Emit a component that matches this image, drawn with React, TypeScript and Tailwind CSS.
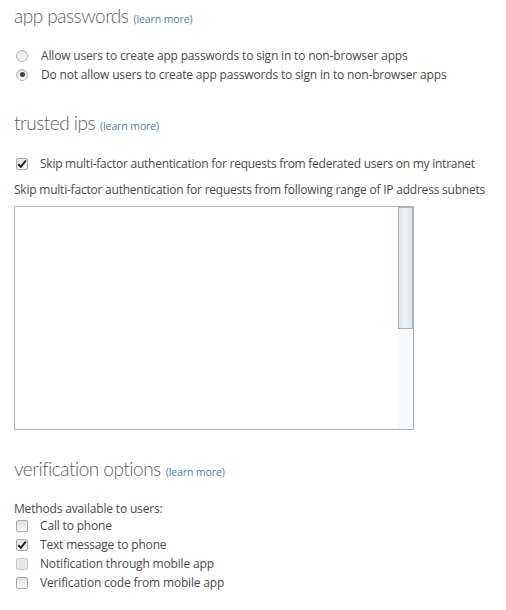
import React from "react";

const font = { fontFamily: '"Open Sans", "Noto Sans", Arial, sans-serif' };

function Radio({ checked }: { checked?: boolean }) {
  return (
    <span className="w-[12px] h-[12px] rounded-full border border-[#b4b4b4] bg-gradient-to-b from-[#e6e6e6] to-[#fafafa] flex items-center justify-center shrink-0">
      {checked && <span className="w-[5px] h-[5px] rounded-full bg-[#444]" />}
    </span>
  );
}

function Check({ checked, disabled }: { checked?: boolean; disabled?: boolean }) {
  return (
    <span
      className={`w-[12px] h-[12px] rounded-[2px] border ${disabled ? "border-[#c8c8c8] bg-[#e8e8e8]" : "border-[#a8a8a8] bg-gradient-to-b from-[#e2e2e2] to-[#f6f6f6]"} flex items-center justify-center shrink-0`}
    >
      {checked && (
        <svg width="10" height="10" viewBox="0 0 10 10">
          <path d="M1.3 5.2 L3.8 7.8 L8.8 1.6" fill="none" stroke="#222" strokeWidth="2" />
        </svg>
      )}
    </span>
  );
}

function Heading({ title }: { title: string }) {
  return (
    <div className="h-[24px] flex items-baseline gap-[5px] overflow-visible">
      <span className="text-[19px] font-light text-[#606060] leading-[24px] tracking-[-0.5px]" style={{ fontFamily: 'Lato, "Open Sans", sans-serif' }}>
        {title}
      </span>
      <span className="text-[10.5px] leading-[14px] text-[#4a7db3] tracking-[-0.1px]">(learn more)</span>
    </div>
  );
}

export default function App() {
  return (
    <div className="w-[506px] h-[610px] bg-white text-[#4a4a4a] text-[12px] leading-[19px] tracking-[-0.17px] pl-[14px] pt-[4px]" style={font}>
      <Heading title="app passwords" />
      <div className="mt-[18px] flex flex-col">
        <label className="flex items-center gap-[13px] pl-[2px]">
          <Radio /> <span>Allow users to create app passwords to sign in to non-browser apps</span>
        </label>
        <label className="flex items-center gap-[13px] pl-[2px]">
          <Radio checked /> <span>Do not allow users to create app passwords to sign in to non-browser apps</span>
        </label>
      </div>

      <div className="mt-[27px]">
        <Heading title="trusted ips" />
      </div>
      <label className="mt-[19px] flex items-center gap-[12px] pl-[2px] tracking-[-0.25px]">
        <Check checked /> <span>Skip multi-factor authentication for requests from federated users on my intranet</span>
      </label>
      <div className="mt-[7px] tracking-[-0.22px]">Skip multi-factor authentication for requests from following range of IP address subnets</div>
      <div className="mt-[7px] w-[400px] h-[224px] border border-[#a9b2bb] flex">
        <div className="flex-1" />
        <div className="w-[15px] flex flex-col">
          <div className="h-[122px] border border-[#a7b4c2] bg-gradient-to-r from-[#dfe7f0] via-[#f0f4f8] to-[#dbe3ec]" />
          <div className="flex-1 bg-[#f6f8fa]" />
        </div>
      </div>

      <div className="mt-[27px]">
        <Heading title="verification options" />
      </div>
      <div className="mt-[18px]">Methods available to users:</div>
      <div className="-mt-[2px] flex flex-col">
        {[
          ["Call to phone", false, false],
          ["Text message to phone", true, false],
          ["Notification through mobile app", false, true],
          ["Verification code from mobile app", false, false],
        ].map(([t, c, d]) => (
          <label key={t as string} className="flex items-center gap-[12px] pl-[2px]">
            <Check checked={c as boolean} disabled={d as boolean} /> <span>{t as string}</span>
          </label>
        ))}
      </div>
    </div>
  );
}
